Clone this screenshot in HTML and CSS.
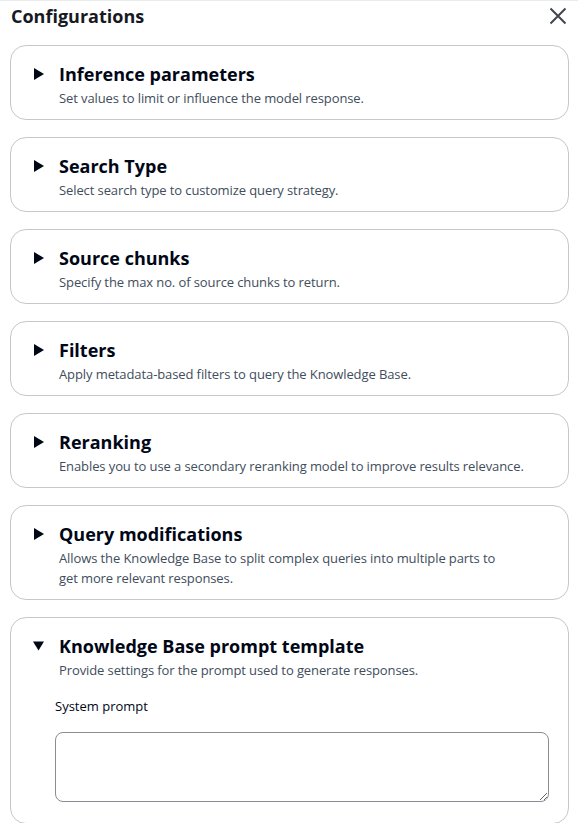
FILE: index.html
```html
<!DOCTYPE html>
<html lang="en">
<head>
<meta charset="utf-8">
<title>Configurations</title>
<link rel="stylesheet" href="styles.css">
</head>
<body>

<section class="panel">

  <header class="panel-header">
    <h1>Configurations</h1>
    <button class="close" aria-label="Close">
      <svg width="18" height="18" viewBox="0 0 18 18"><path d="M1.5 1.5 L16.5 16.5 M16.5 1.5 L1.5 16.5" stroke="#414750" stroke-width="2" fill="none"/></svg>
    </button>
  </header>

  <div class="cards">

    <div class="card">
      <div class="card-head">
        <span class="caret"><svg width="10" height="12" viewBox="0 0 10 12"><path d="M0 0 L10 6 L0 12 Z" fill="#000716"/></svg></span>
        <div>
          <h2>Inference parameters</h2>
          <p>Set values to limit or influence the model response.</p>
        </div>
      </div>
    </div>

    <div class="card">
      <div class="card-head">
        <span class="caret"><svg width="10" height="12" viewBox="0 0 10 12"><path d="M0 0 L10 6 L0 12 Z" fill="#000716"/></svg></span>
        <div>
          <h2>Search Type</h2>
          <p>Select search type to customize query strategy.</p>
        </div>
      </div>
    </div>

    <div class="card">
      <div class="card-head">
        <span class="caret"><svg width="10" height="12" viewBox="0 0 10 12"><path d="M0 0 L10 6 L0 12 Z" fill="#000716"/></svg></span>
        <div>
          <h2>Source chunks</h2>
          <p>Specify the max no. of source chunks to return.</p>
        </div>
      </div>
    </div>

    <div class="card">
      <div class="card-head">
        <span class="caret"><svg width="10" height="12" viewBox="0 0 10 12"><path d="M0 0 L10 6 L0 12 Z" fill="#000716"/></svg></span>
        <div>
          <h2>Filters</h2>
          <p>Apply metadata-based filters to query the Knowledge Base.</p>
        </div>
      </div>
    </div>

    <div class="card">
      <div class="card-head">
        <span class="caret"><svg width="10" height="12" viewBox="0 0 10 12"><path d="M0 0 L10 6 L0 12 Z" fill="#000716"/></svg></span>
        <div>
          <h2>Reranking</h2>
          <p>Enables you to use a secondary reranking model to improve results relevance.</p>
        </div>
      </div>
    </div>

    <div class="card">
      <div class="card-head">
        <span class="caret"><svg width="10" height="12" viewBox="0 0 10 12"><path d="M0 0 L10 6 L0 12 Z" fill="#000716"/></svg></span>
        <div>
          <h2>Query modifications</h2>
          <p>Allows the Knowledge Base to split complex queries into multiple parts to<br>get more relevant responses.</p>
        </div>
      </div>
    </div>

    <div class="card open">
      <div class="card-head">
        <span class="caret"><svg width="12" height="10" viewBox="0 0 12 10"><path d="M0 0 L12 0 L6 10 Z" fill="#000716"/></svg></span>
        <div>
          <h2>Knowledge Base prompt template</h2>
          <p>Provide settings for the prompt used to generate responses.</p>
        </div>
      </div>
      <div class="card-body">
        <label for="system-prompt">System prompt</label>
        <textarea id="system-prompt"></textarea>
      </div>
    </div>

  </div>

</section>

</body>
</html>
```

FILE: styles.css
```css
html, body {
    margin: 0;
    padding: 0;
    background: #fff;
}
body {
    font: normal 13px/20px "Open Sans", "Noto Sans", sans-serif;
    color: #000716;
}

.panel {
    border-top: 1px solid #e9ebed;
    padding: 0 9px 0 10px;
}

.panel-header {
    display: flex;
    justify-content: space-between;
    align-items: center;
    height: 30px;
    padding-left: 1px;
}
.panel-header h1 {
    margin: 0;
    font-size: 18px;
    font-weight: 700;
    line-height: 24px;
    color: #16191f;
}
.close {
    border: 0;
    background: none;
    padding: 0;
    margin: 0 2px 0 0;
    width: 18px;
    height: 18px;
    display: flex;
}

.cards {
    display: flex;
    flex-direction: column;
    gap: 17px;
    padding-top: 14px;
}

.card {
    border: 1px solid #c6c6cd;
    border-radius: 16px;
    padding: 16px 30px 11px 22px;
}

.card-head {
    display: flex;
    gap: 15px;
}
.caret {
    width: 11px;
    height: 24px;
    display: flex;
    align-items: center;
    justify-content: center;
    flex: none;
}
.card-head h2 {
    margin: 0;
    font-size: 18px;
    font-weight: 700;
    line-height: 24px;
    color: #000716;
}
.card-head p {
    margin: 2px 0 0 0;
    color: #414d5c;
    line-height: 20px;
    letter-spacing: -0.1px;
}

.card-body {
    padding: 16px 0 10px 22px;
    margin-right: -11px;
    display: flex;
    flex-direction: column;
}
.card-body label {
    color: #000716;
    line-height: 20px;
}
.card-body textarea {
    box-sizing: border-box;
    margin-top: 16px;
    height: 70px;
    border: 1px solid #8c8c94;
    border-radius: 8px;
    resize: vertical;
    font: inherit;
}
```
